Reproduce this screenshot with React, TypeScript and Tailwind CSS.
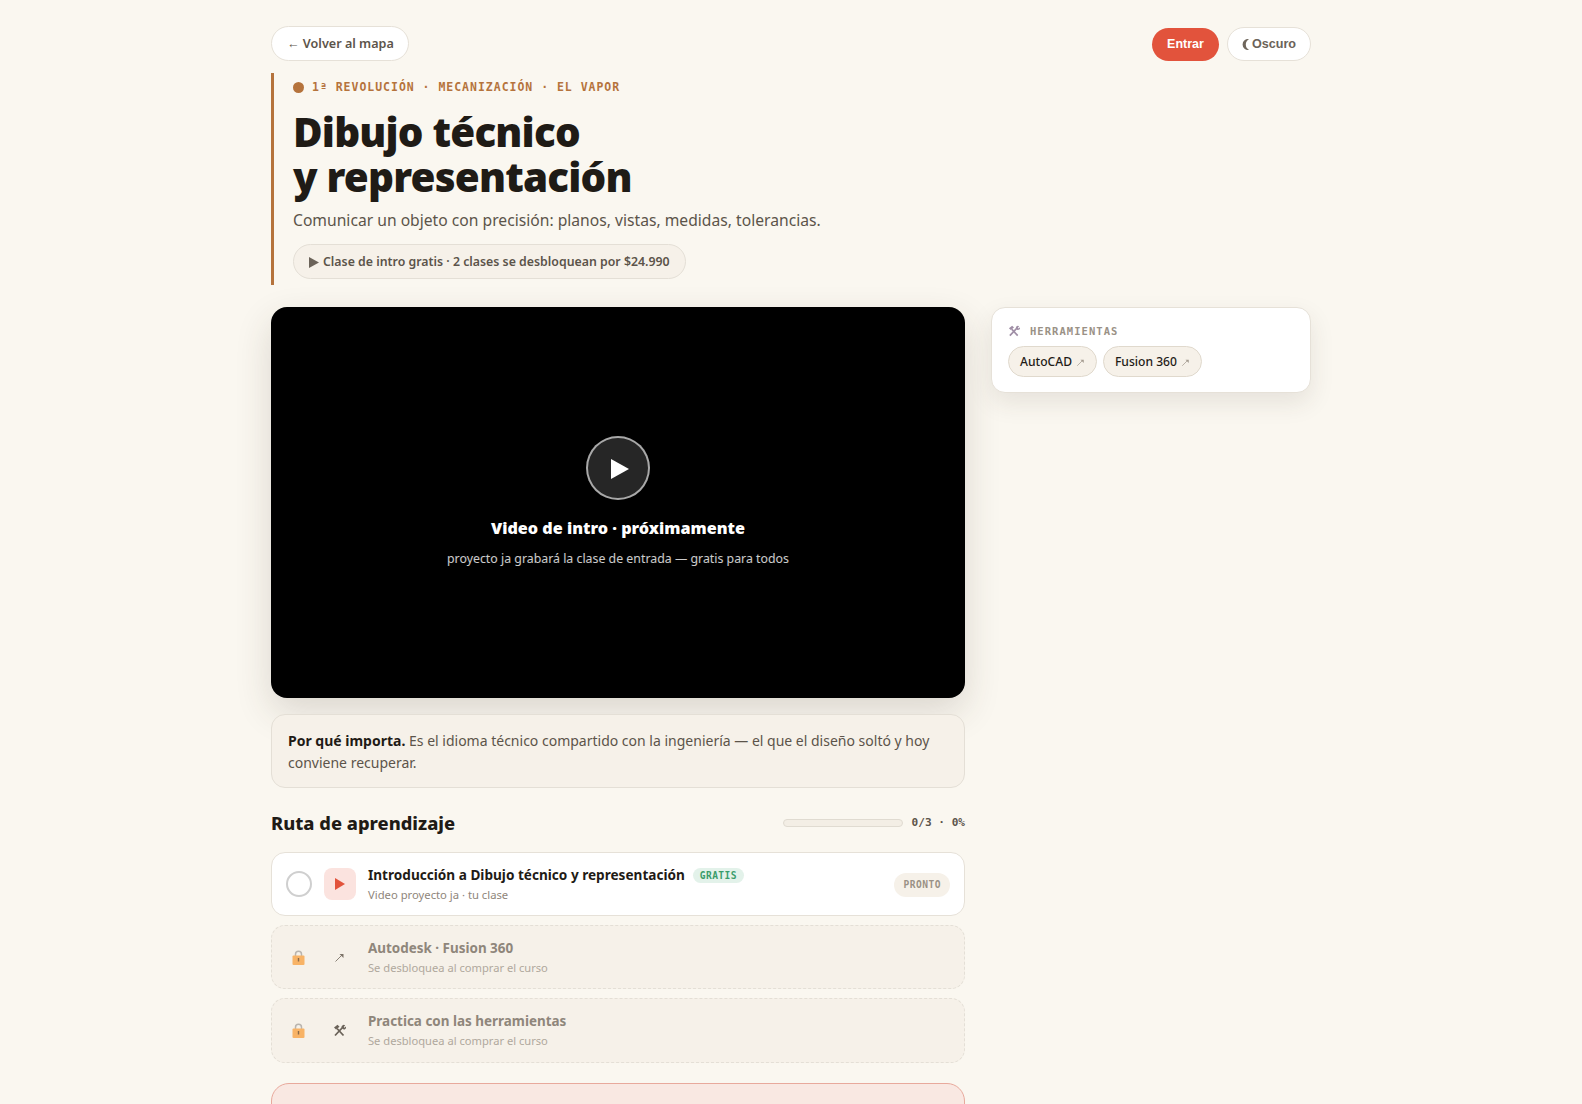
import React from 'react';

const sans = "font-['Noto_Sans',sans-serif]";
const mono = "font-['DejaVu_Sans_Mono',monospace]";

const Lock = () => (
  <svg width="13" height="15" viewBox="0 0 13 15" className="block">
    <path d="M3.5 7V4.2a3 3 0 0 1 6 0V7" fill="none" stroke="#b9b4ae" strokeWidth="1.5" />
    <rect x="0.5" y="5.5" width="12" height="9.5" rx="1" fill="#f8b366" />
    <rect x="5.8" y="8" width="1.4" height="3.5" fill="#8a6a48" />
  </svg>
);

const Tools = ({ color = '#6b6359', size = 13 }: { color?: string; size?: number }) => (
  <svg width={size} height={size} viewBox="0 0 13 13" className="block">
    <path d="M2 11.5L10.5 2.5M10.5 11.5L4 4.5" fill="none" stroke={color} strokeWidth="1.8" />
    <path d="M1 3.5L4.5 0.8l2 2L3 5.5z" fill={color} />
    <path d="M8.5 3.2a2.2 2.2 0 0 1 3.6-1.8l-1.5 1.5 .9 .9 1.5-1.3a2.2 2.2 0 0 1-3.2 2.6z" fill={color} />
  </svg>
);

const NorthEast = ({ color = '#7d7469', size = 11 }: { color?: string; size?: number }) => (
  <svg width={size} height={size} viewBox="0 0 11 11" className="block">
    <path d="M1.5 9.5L8.5 2.5" fill="none" stroke={color} strokeWidth="0.9" />
    <path d="M5.5 2h4v4z" fill={color} />
  </svg>
);

const LockedRow = ({ icon, title, tall }: { icon: React.ReactNode; title: string; tall?: boolean }) => (
  <div className={`flex items-center rounded-[14px] border border-dashed border-[#e4dfd6] bg-[#f6f1e9] pl-[14px] pr-[14px] ${tall ? 'h-[65px]' : 'h-[64px]'}`}>
    <div className="flex w-[25px] justify-center">
      <Lock />
    </div>
    <div className="ml-[12px] flex w-[32px] justify-center">{icon}</div>
    <div className="ml-[13px]">
      <div className="text-[13.45px] font-bold leading-[20px] text-[#8f867b]">{title}</div>
      <div className="mt-[1px] text-[11.15px] leading-[18px] text-[#b0a89d]">Se desbloquea al comprar el curso</div>
    </div>
  </div>
);

export default function App() {
  return (
    <div className={`${sans} min-h-screen bg-[#faf7f0] text-[#1f1b16]`}>
      <div className="mx-auto w-[1040px] pt-[26px]">
        <div className="flex items-start justify-between">
          <a className="flex h-[35px] items-center rounded-full border border-[#e6e1d8] bg-white pl-[15px] pr-[14px] pt-[1px] text-[12.6px] font-semibold text-[#5c544a]">
            ← Volver al mapa
          </a>
          <div className="flex items-center gap-[8px] pt-[1px]">
            <a className="flex h-[33px] items-center rounded-full bg-[#e2533c] px-[15px] font-['Liberation_Sans',sans-serif] text-[12.5px] font-bold text-white">
              Entrar
            </a>
            <a className="flex h-[34px] items-center rounded-full border border-[#e6e1d8] bg-white px-[14px] font-['Liberation_Sans',sans-serif] text-[12.6px] font-bold text-[#6b6359]">
              <svg width="8" height="11" viewBox="0 0 8 11" className="mr-[2px] block">
                <path d="M7 0.2A5.4 5.4 0 1 0 7 10.8 6 6 0 0 1 7 0.2z" fill="#6f665c" />
              </svg>
              Oscuro
            </a>
          </div>
        </div>

        <header className="mt-[12px] h-[212px] border-l-[3px] border-[#b5733c] pl-[19px] pt-[6px]">
          <div className={`${mono} flex items-center text-[11.5px] font-bold leading-[16px] tracking-[0.085em] text-[#b5733c]`}>
            <span className="mr-[8px] h-[11px] w-[11px] rounded-full bg-[#b5733c]" />
            1ª REVOLUCIÓN · MECANIZACIÓN · EL VAPOR
          </div>
          <h1 className="mt-[14px] text-[40.4px] font-black leading-[45px] tracking-[-0.02em] text-[#1f1b16]">
            Dibujo técnico
            <br />y representación
          </h1>
          <p className="mt-[9px] text-[15.66px] leading-[24px] text-[#5c544a]">
            Comunicar un objeto con precisión: planos, vistas, medidas, tolerancias.
          </p>
          <div className="mt-[12px] inline-flex h-[35px] items-center rounded-full border border-[#e4dfd6] bg-[#f6f1e9] px-[15px] pt-[1px] text-[12.33px] font-semibold text-[#5c544a]">
            <svg width="10" height="11" viewBox="0 0 10 11" className="mr-[4px] block">
              <path d="M0 0l10 5.5L0 11z" fill="#6b6359" />
            </svg>
            Clase de intro gratis · 2 clases se desbloquean por $24.990
          </div>
        </header>

        <div className="mt-[22px] grid grid-cols-[694px_320px] gap-[26px]">
          <main>
            <div className="flex h-[391px] flex-col items-center justify-center rounded-[16px] bg-black shadow-[0_14px_36px_rgba(60,50,35,0.16)]">
              <div className="flex h-[64px] w-[64px] items-center justify-center rounded-full border-2 border-white/60 bg-white/15 pl-[4px] pt-[1px]">
                <svg width="18" height="20" viewBox="0 0 18 20"><path d="M0 0l18 10L0 20z" fill="#fff" /></svg>
              </div>
              <div className="mt-[16px] text-[16.2px] font-black leading-[24px] text-white">Video de intro · próximamente</div>
              <div className="mt-[9px] text-[12.35px] leading-[20px] text-white/80">
                proyecto ja grabará la clase de entrada — gratis para todos
              </div>
            </div>

            <div className="mt-[16px] rounded-[14px] border border-[#e4dfd6] bg-[#f6f1e9] px-[16px] pb-[13px] pt-[15px] text-[14px] leading-[22px] text-[#5c544a]">
              <strong className="font-bold text-[#1f1b16]">Por qué importa.</strong> Es el idioma técnico compartido con la ingeniería — el que el diseño soltó y hoy conviene recuperar.
            </div>

            <div className="mt-[22px] flex items-center justify-between">
              <h2 className="text-[18.3px] font-extrabold leading-[26px]">Ruta de aprendizaje</h2>
              <div className="flex items-center gap-[9px]">
                <div className="h-[8px] w-[120px] rounded-full border border-[#e0dbd1] bg-[#f3eee5]" />
                <span className={`${mono} text-[11.1px] font-bold text-[#5c544a]`}>0/3 · 0%</span>
              </div>
            </div>

            <div className="mt-[16px] flex flex-col gap-[9px]">
              <div className="flex h-[64px] items-center rounded-[14px] border border-[#e6e1d8] bg-white pl-[14px] pr-[14px]">
                <div className="h-[26px] w-[26px] rounded-full border-2 border-[#cfcfcf]" />
                <div className="ml-[12px] flex h-[32px] w-[32px] items-center justify-center rounded-[8px] bg-[#fbe3df]">
                  <svg width="10" height="12" viewBox="0 0 10 12"><path d="M0 0l10 6-10 6z" fill="#e2533c" /></svg>
                </div>
                <div className="ml-[12px] flex-1">
                  <div className="flex items-center">
                    <span className="text-[13.6px] font-bold leading-[20px] text-[#1f1b16]">Introducción a Dibujo técnico y representación</span>
                    <span className={`${mono} ml-[8px] mt-[2px] rounded-full bg-[#e3f2ea] px-[7px] text-[9.6px] font-bold leading-[15px] tracking-[0.04em] text-[#3a9d6a]`}>GRATIS</span>
                  </div>
                  <div className="mt-[1px] text-[11.25px] leading-[18px] text-[#8f867b]">Video proyecto ja · tu clase</div>
                </div>
                <span className={`${mono} mt-[1px] rounded-full bg-[#f6f1e9] px-[9px] py-[5px] text-[9.6px] font-bold leading-[14px] tracking-[0.05em] text-[#9a9186]`}>PRONTO</span>
              </div>
              <LockedRow icon={<NorthEast />} title="Autodesk · Fusion 360" />
              <LockedRow icon={<Tools />} title="Practica con las herramientas" tall />
            </div>

            <div className="mt-[20px] h-[120px] rounded-[18px] border border-[#e8a99c] bg-[#f9e8e2]" />
          </main>

          <aside>
            <div className="h-[86px] rounded-[14px] border border-[#e6e1d8] bg-white px-[16px] pt-[15px] shadow-[0_10px_24px_rgba(60,50,35,0.1)]">
              <div className={`${mono} flex items-center text-[10.5px] font-bold leading-[16px] tracking-[0.1em] text-[#9a9186]`}>
                <span className="mr-[10px]"><Tools color="#a08fa6" size={12} /></span>HERRAMIENTAS
              </div>
              <div className="mt-[7px] flex gap-[6px]">
                {['AutoCAD', 'Fusion 360'].map(name => (
                  <a key={name} className="flex h-[31px] items-center gap-[4px] rounded-full border border-[#e0d9cd] bg-[#f6f1e9] px-[11px] pt-[1px] text-[12.1px] font-medium text-[#1f1b16]">
                    {name} <NorthEast color="#a39a8f" size={9} />
                  </a>
                ))}
              </div>
            </div>
          </aside>
        </div>
      </div>
    </div>
  );
}
